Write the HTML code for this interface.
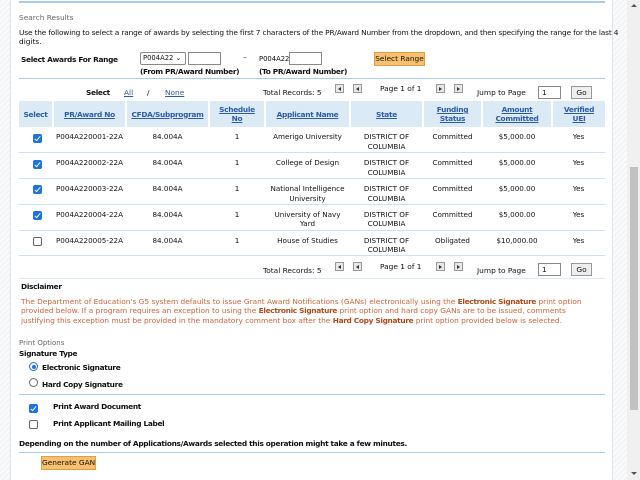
<!DOCTYPE html>
<html><head><meta charset="utf-8"><style>
*{margin:0;padding:0;box-sizing:border-box}
body{width:640px;height:480px;overflow:hidden;position:relative;font-family:"DejaVu Sans","Liberation Sans",sans-serif;font-size:7.4px;color:#111;
background:repeating-linear-gradient(135deg,#f4f4f4 0 2px,#fbfbfb 2px 4px);}
.a{position:absolute;white-space:nowrap}
.panel{position:absolute;left:10px;top:0;width:603px;height:480px;background:#fff;border-left:1px solid #d8e6f3;border-right:1px solid #d8e6f3}
.hl{position:absolute;left:19px;width:586px;height:1px;background:#a9cbec}
.b,b{font-weight:bold;letter-spacing:-0.32px}
.lnk{color:#2a5ca8;text-decoration:underline}
.btn{position:absolute;background:#f7c070;border:1px solid #e0a040;text-align:center;font-size:7.4px;white-space:nowrap}
.inp{position:absolute;border:1px solid #8a8a8a;background:#fff;height:13px;white-space:nowrap}
.cb{position:absolute;width:9px;height:9px;border-radius:2px}
.cb.on{background:#1a73e8}
.cb.on::after{content:"";position:absolute;left:3px;top:1px;width:2px;height:5px;border:solid #fff;border-width:0 1.5px 1.5px 0;transform:rotate(40deg)}
.cb.off{border:1px solid #666;background:#fff}
.pg{position:absolute;width:9px;height:9px;border:1px solid #999;background:#e8e8e8}
.pg i{position:absolute;left:2px;top:2px;width:0;height:0;border-top:2px solid transparent;border-bottom:2px solid transparent}
table{position:absolute;left:19px;top:101px;width:586px;border-collapse:collapse}
th{background:#dceaf6;color:#2a5ca8;font-weight:bold;letter-spacing:-0.3px;height:26px;border-right:2px solid #fff;text-align:center;font-size:7.4px;line-height:9px}
th span{text-decoration:underline}
td{height:25.8px;vertical-align:top;padding-top:5px;text-align:center;border-bottom:1px solid #cfe0f0;line-height:9.5px;font-size:7.2px}
.disc{color:#c8653a}
.disc b{color:#b04a1a}
.sb{position:absolute;left:627px;top:0;width:13px;height:480px;background:#f0f0f0}
</style></head><body>
<div class="panel"></div>
<div class="hl" style="top:1px;height:2px"></div>
<div class="a" style="left:19px;top:13px;color:#666">Search Results</div>
<div class="a" style="left:19px;top:28px;letter-spacing:-0.16px">Use the following to select a range of awards by selecting the first 7 characters of the PR/Award Number from the dropdown, and then specifying the range for the last 4</div>
<div class="a" style="left:19px;top:37px">digits.</div>
<div class="a b" style="left:21px;top:55px">Select Awards For Range</div>
<div class="inp" style="left:140px;top:52px;width:46px;font-size:6.8px;padding:1px 2px;border-radius:2px">P004A22 &#x2304;</div>
<div class="inp" style="left:188px;top:52px;width:33px"></div>
<div class="a" style="left:243px;top:53px">–</div>
<div class="a" style="left:259px;top:55px;font-size:6.8px">P004A22</div>
<div class="inp" style="left:289px;top:52px;width:33px"></div>
<div class="btn" style="left:374px;top:52px;width:51px;height:14px;line-height:12px">Select Range</div>
<div class="a b" style="left:140px;top:67px">(From PR/Award Number)</div>
<div class="a b" style="left:259px;top:67px">(To PR/Award Number)</div>
<div class="hl" style="top:78px"></div>

<div class="a b" style="left:86px;top:88px">Select</div>
<div class="a lnk" style="left:124px;top:88px">All</div>
<div class="a" style="left:147px;top:88px">/</div>
<div class="a lnk" style="left:165px;top:88px">None</div>
<div class="a" style="left:263px;top:88px">Total Records: 5</div>
<div class="pg" style="left:335px;top:84px"><i style="border-right:3px solid #333"></i></div>
<div class="pg" style="left:353px;top:84px"><i style="border-right:3px solid #333"></i></div>
<div class="a" style="left:380px;top:84px">Page 1 of 1</div>
<div class="pg" style="left:436px;top:84px"><i style="border-left:3px solid #333"></i></div>
<div class="pg" style="left:454px;top:84px"><i style="border-left:3px solid #333"></i></div>
<div class="a" style="left:477px;top:88px">Jump to Page</div>
<div class="inp" style="left:538px;top:86px;width:23px;padding:1px 3px">1</div>
<div class="btn" style="left:571px;top:86px;width:21px;height:13px;background:#eee;border-color:#999;line-height:11px">Go</div>

<table>
<tr><th style="width:34px;color:#2a5ca8">Select</th><th style="width:73px"><span>PR/Award No</span></th><th style="width:83px"><span>CFDA/Subprogram</span></th><th style="width:56px"><span>Schedule<br>No</span></th><th style="width:85px"><span>Applicant Name</span></th><th style="width:73px"><span>State</span></th><th style="width:59px"><span>Funding<br>Status</span></th><th style="width:70px"><span>Amount<br>Committed</span></th><th style="border-right:0"><span>Verified<br>UEI</span></th></tr>
<tr><td></td><td>P004A220001-22A</td><td>84.004A</td><td>1</td><td>Amerigo University</td><td>DISTRICT OF<br>COLUMBIA</td><td>Committed</td><td>$5,000.00</td><td>Yes</td></tr>
<tr><td></td><td>P004A220002-22A</td><td>84.004A</td><td>1</td><td>College of Design</td><td>DISTRICT OF<br>COLUMBIA</td><td>Committed</td><td>$5,000.00</td><td>Yes</td></tr>
<tr><td></td><td>P004A220003-22A</td><td>84.004A</td><td>1</td><td>National Intelligence<br>University</td><td>DISTRICT OF<br>COLUMBIA</td><td>Committed</td><td>$5,000.00</td><td>Yes</td></tr>
<tr><td></td><td>P004A220004-22A</td><td>84.004A</td><td>1</td><td>University of Navy<br>Yard</td><td>DISTRICT OF<br>COLUMBIA</td><td>Committed</td><td>$5,000.00</td><td>Yes</td></tr>
<tr><td></td><td>P004A220005-22A</td><td>84.004A</td><td>1</td><td>House of Studies</td><td>DISTRICT OF<br>COLUMBIA</td><td>Obligated</td><td>$10,000.00</td><td>Yes</td></tr>
</table>
<div class="cb on" style="left:33px;top:134px"></div>
<div class="cb on" style="left:33px;top:160px"></div>
<div class="cb on" style="left:33px;top:185px"></div>
<div class="cb on" style="left:33px;top:211px"></div>
<div class="cb off" style="left:33px;top:237px"></div>

<div class="a" style="left:263px;top:266px">Total Records: 5</div>
<div class="pg" style="left:335px;top:262px"><i style="border-right:3px solid #333"></i></div>
<div class="pg" style="left:353px;top:262px"><i style="border-right:3px solid #333"></i></div>
<div class="a" style="left:380px;top:262px">Page 1 of 1</div>
<div class="pg" style="left:436px;top:262px"><i style="border-left:3px solid #333"></i></div>
<div class="pg" style="left:454px;top:262px"><i style="border-left:3px solid #333"></i></div>
<div class="a" style="left:477px;top:266px">Jump to Page</div>
<div class="inp" style="left:538px;top:263px;width:23px;padding:1px 3px">1</div>
<div class="btn" style="left:571px;top:263px;width:21px;height:13px;background:#eee;border-color:#999;line-height:11px">Go</div>
<div class="hl" style="top:278px;background:#dceaf6"></div>

<div class="a b" style="left:21px;top:282px">Disclaimer</div>
<div class="a disc" style="left:21px;top:297px">The Department of Education's G5 system defaults to issue Grant Award Notifications (GANs) electronically using the <b>Electronic Signature</b> print option</div>
<div class="a disc" style="left:21px;top:306px">provided below. If a program requires an exception to using the <b>Electronic Signature</b> print option and hard copy GANs are to be issued, comments</div>
<div class="a disc" style="left:21px;top:316px">justifying this exception must be provided in the mandatory comment box after the <b>Hard Copy Signature</b> print option provided below is selected.</div>

<div class="a" style="left:19px;top:339px;color:#666;font-size:7px">Print Options</div>
<div class="a b" style="left:19px;top:349px">Signature Type</div>
<div class="a" style="left:29px;top:362px;width:9px;height:9px;border-radius:50%;border:1px solid #1a73e8;background:#fff"><div style="position:absolute;left:1.5px;top:1.5px;width:4px;height:4px;border-radius:50%;background:#1a73e8"></div></div>
<div class="a b" style="left:42px;top:363px">Electronic Signature</div>
<div class="a" style="left:29px;top:378px;width:9px;height:9px;border-radius:50%;border:1px solid #666;background:#fff"></div>
<div class="a b" style="left:42px;top:380px">Hard Copy Signature</div>
<div class="hl" style="top:394px"></div>
<div class="cb on" style="left:29px;top:404px"></div>
<div class="a b" style="left:53px;top:402px">Print Award Document</div>
<div class="cb off" style="left:29px;top:420px"></div>
<div class="a b" style="left:53px;top:419px">Print Applicant Mailing Label</div>
<div class="a b" style="left:19px;top:439px">Depending on the number of Applications/Awards selected this operation might take a few minutes.</div>
<div class="hl" style="top:452px"></div>
<div class="btn" style="left:41px;top:456px;width:55px;height:14px;line-height:12px">Generate GAN</div>

<div class="sb"><div style="position:absolute;left:3px;top:167px;width:8px;height:243px;background:#c1c1c1"></div>
<div style="position:absolute;left:4px;top:4px;border-left:3px solid transparent;border-right:3px solid transparent;border-bottom:3px solid #555"></div>
<div style="position:absolute;left:4px;top:472px;border-left:3px solid transparent;border-right:3px solid transparent;border-top:3px solid #555"></div></div>
</body></html>
